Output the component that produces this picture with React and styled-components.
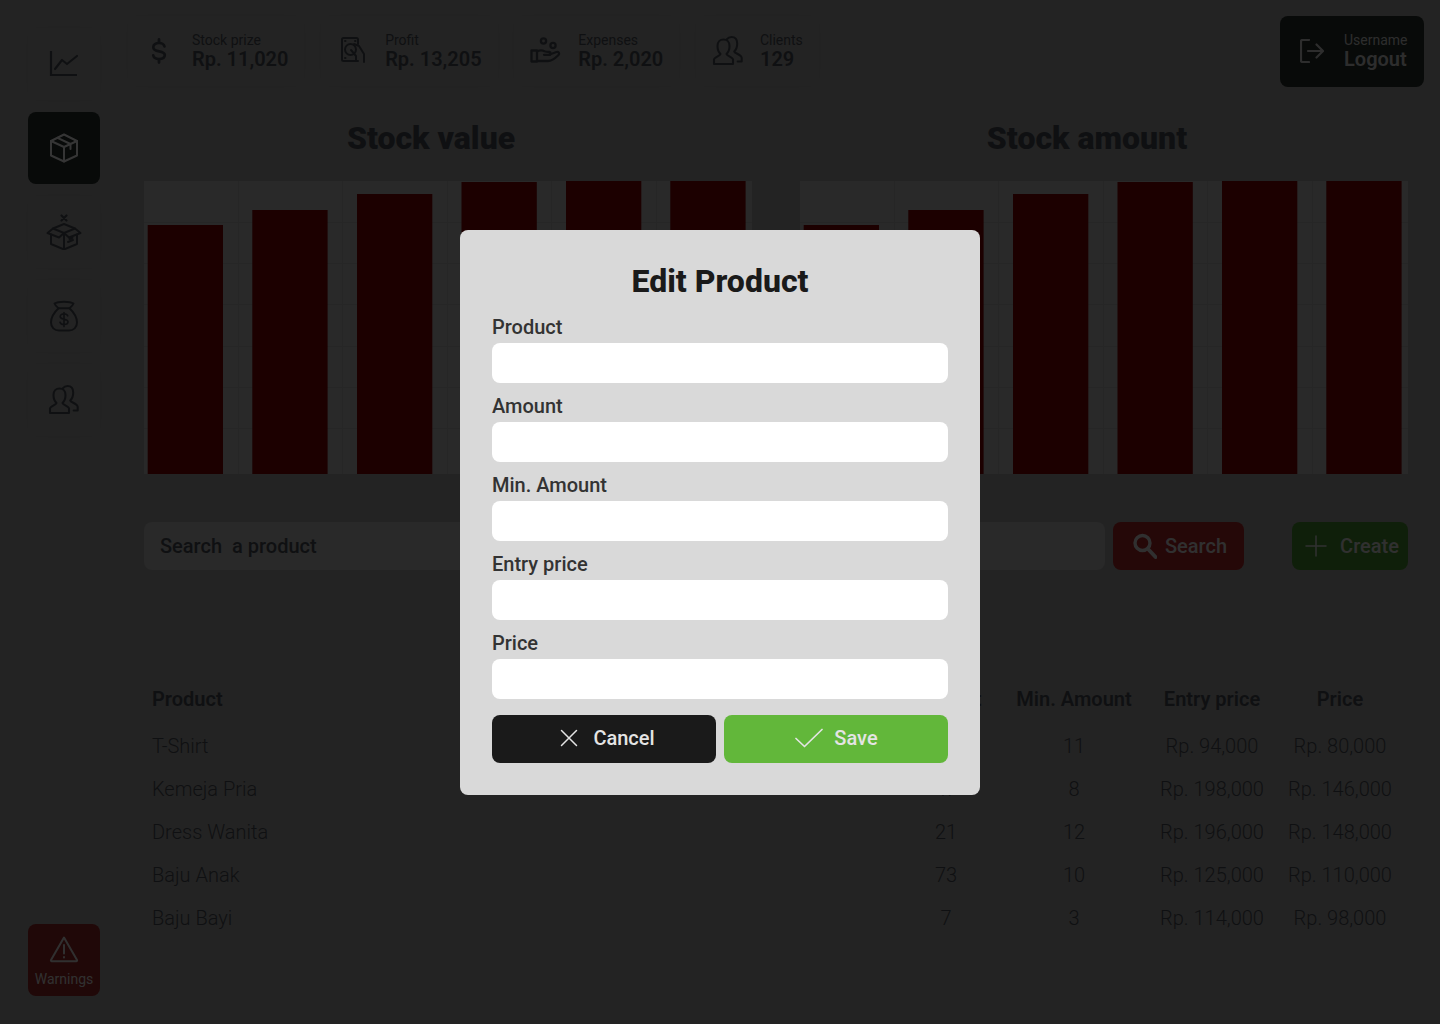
import React from 'react'
import styled, { createGlobalStyle } from 'styled-components'

const stats = [
  { label: 'Stock prize', value: 'Rp. 11,020', icon: <DollarIcon /> },
  { label: 'Profit', value: 'Rp. 13,205', icon: <ProfitIcon /> },
  { label: 'Expenses', value: 'Rp. 2,020', icon: <ExpenseIcon /> },
  { label: 'Clients', value: '129', icon: <UsersIcon /> },
]

const products = [
  ['T-Shirt', '43', '11', 'Rp. 94,000', 'Rp. 80,000'],
  ['Kemeja Pria', '47', '8', 'Rp. 198,000', 'Rp. 146,000'],
  ['Dress Wanita', '21', '12', 'Rp. 196,000', 'Rp. 148,000'],
  ['Baju Anak', '73', '10', 'Rp. 125,000', 'Rp. 110,000'],
  ['Baju Bayi', '7', '3', 'Rp. 114,000', 'Rp. 98,000'],
]

const fields = ['Product', 'Amount', 'Min. Amount', 'Entry price', 'Price']

const bars = [
  { x: 3.7, top: 44 },
  { x: 108.3, top: 29 },
  { x: 213, top: 13 },
  { x: 317.5, top: 1 },
  { x: 422, top: 0 },
  { x: 526.3, top: 0 },
]

function Svg({ size = 32, h, box, children, sw = 2 }) {
  return (
    <svg width={size} height={h || size} viewBox={box || '0 0 32 32'} fill="none" stroke="currentColor"
      strokeWidth={sw} strokeLinecap="round" strokeLinejoin="round">
      {children}
    </svg>
  )
}

function DollarIcon() {
  return (
    <Svg>
      <path d="M15 4.500v3M15 24.500v3" strokeWidth="2.8" />
      <path d="M20.500 11.500C20 9.300 17.800 8 15 8c-3.300 0-5.700 1.700-5.700 4.200 0 6 11.500 2.300 11.500 7.900 0 2.500-2.500 3.900-5.800 3.900-3 0-5.300-1.400-5.800-3.700" strokeWidth="2.7" />
    </Svg>
  )
}

function ProfitIcon() {
  return (
    <Svg sw={2}>
      <path d="M21 26H6.500A1.500 1.500 0 0 1 5 24.500v-20A1.500 1.500 0 0 1 6.500 3h13A1.500 1.500 0 0 1 21 4.500V9" />
      <circle cx="13.500" cy="14.500" r="5.500" />
      <path d="M17 9l5 2 5 8v8M14 15l5 6v5" />
      <path d="M8 6h.5M18 6h.5M8 23h.5" />
    </Svg>
  )
}

function ExpenseIcon() {
  return (
    <Svg sw={2.3}>
      <circle cx="13.500" cy="6" r="2.600" />
      <circle cx="23" cy="10.500" r="2.600" />
      <path d="M1.500 15.500h5.500v11H1.500z" />
      <path d="M7 16.500c3-1.500 5-1.500 7.500-.2 1.500.7 3.500.7 5 .7 1.300 0 1.800 2.800-.5 2.800h-5" />
      <path d="M19.500 19.500l7-2.500c2-.6 3.500 1.500 2 3-3 3-6.500 6-10.500 6H7" />
    </Svg>
  )
}

function UsersIcon() {
  return (
    <Svg sw={2.1}>
      <path d="M2 29v-4.500c0-2 6-3.500 6.500-5.500-2.200-2-3-5-3-8 0-4 2.500-6.500 6-6.500s6 2.500 6 6.500c0 3-.8 6-3 8 .5 2 6.500 3.500 6.500 5.500V29z" />
      <path d="M15 4.200C16 2.800 17.500 2 19.500 2c3.500 0 5.700 2.500 5.700 6.500 0 3-.8 6-3 8 .5 2 7.500 3 7.500 6.500v3.500h-4" />
    </Svg>
  )
}

function ChartIcon() {
  return (
    <Svg sw={2.2}>
      <path d="M3 3v24h26" strokeLinecap="butt" strokeLinejoin="miter" />
      <path d="M7 21l7-9 5 4 10-8" />
    </Svg>
  )
}

function BoxIcon() {
  return (
    <Svg sw={2}>
      <path d="M16 2.500L29 9v14.500L16 29.500 3 23.500V9z" />
      <path d="M3 9l13 6 13-6M16 15v14.500M9.500 5.800l13 6.200v5" />
    </Svg>
  )
}

function BoxXIcon() {
  return (
    <Svg size={36} h={36} box="0 0 36 36" sw={2}>
      <path d="M15.500 1.500l5 5M20.500 1.500l-5 5" strokeWidth="2.200" />
      <path d="M18 10l11 4.500L18 19 7 14.500z" />
      <path d="M7 14.500L1.500 19 13 23.500l5-4.500 5 4.500L34.500 19 29 14.500" />
      <path d="M5 20.500V30l13 5.500L31 30v-9.500M18 19v16.500M22 28l5-2M23.500 25l3-1.200" />
    </Svg>
  )
}

function BagIcon() {
  return (
    <Svg size={32} sw={2}>
      <path d="M6.500 3.500C10 1 22 1 25.500 3.500c-1 2.500-3 4-4 4.700h-11c-1-.7-3-2.200-4-4.700z" />
      <path d="M10.500 8.200C6.500 12 3 17 3 22.500c0 5 3.500 8 8 8h10c4.500 0 8-3 8-8 0-5.500-3.500-10.500-7.500-14.300" />
      <path d="M16 12.500v14M19.700 15.800c-.5-1.400-2-2-3.700-2-2.300 0-3.800 1.100-3.800 2.800 0 3.800 7.800 1.500 7.800 5.200 0 1.700-1.700 2.700-4 2.700-2 0-3.500-.8-4-2.300" strokeWidth="1.700" />
    </Svg>
  )
}

function WarnIcon() {
  return (
    <Svg sw={2}>
      <path d="M16 4.500L29 27a.8.8 0 0 1-.7 1.200H3.700A.8.8 0 0 1 3 27z" />
      <path d="M16 12v8.500M16 24v.5" />
    </Svg>
  )
}

function LogoutIcon() {
  return (
    <Svg size={24} box="0 0 24 24" sw={2.2}>
      <path d="M9 1H2.500A1.500 1.500 0 0 0 1 2.500v19A1.500 1.500 0 0 0 2.500 23H9" />
      <path d="M8 12h15M16.500 5.500L23 12l-6.500 6.500" />
    </Svg>
  )
}

function SearchIcon() {
  return (
    <Svg size={24} h={26} box="0 0 24 26" sw={3.400}>
      <circle cx="9.500" cy="10" r="7.500" />
      <path d="M15.500 16.500l7 7.500" strokeWidth="3.800" />
    </Svg>
  )
}

function PlusIcon() {
  return (
    <Svg size={22} box="0 0 22 22" sw={1.5}>
      <path d="M11 1v20M1 11h20" />
    </Svg>
  )
}

function CloseIcon() {
  return (
    <Svg size={18} box="0 0 18 18" sw={1.5}>
      <path d="M1.500 1.500l15 15M16.500 1.500l-15 15" />
    </Svg>
  )
}

function CheckIcon() {
  return (
    <Svg size={28} h={20} box="0 0 28 20" sw={1.7}>
      <path d="M1 10.500L9.500 18.500 27 1.500" />
    </Svg>
  )
}

function Chart() {
  return (
    <ChartSvg width="608" height="293" viewBox="0 0 608 293">
      <rect width="608" height="293" fill="#a2a2a2" />
      {[41, 82, 123, 165, 206, 247].map((y) => (
        <line key={y} x1="0" x2="608" y1={y + 0.5} y2={y + 0.5} stroke="#969696" />
      ))}
      {[94, 198, 303, 407, 512].map((x) => (
        <line key={x} x1={x + 0.5} x2={x + 0.5} y1="0" y2="293" stroke="#969696" />
      ))}
      {bars.map((b) => (
        <rect key={b.x} x={b.x} y={b.top} width="75.300" height={293 - b.top} fill="#700000" />
      ))}
    </ChartSvg>
  )
}

export default function App() {
  return (
    <>
      <GlobalStyle />
      <Page>
        <Sidebar>
          <NavItem><ChartIcon /></NavItem>
          <NavItem $active><BoxIcon /></NavItem>
          <NavItem><BoxXIcon /></NavItem>
          <NavItem><BagIcon /></NavItem>
          <NavItem><UsersIcon /></NavItem>
          <WarningBtn>
            <WarnIcon />
            <span>Warnings</span>
          </WarningBtn>
        </Sidebar>

        <Main>
          <TopBar>
            <Stats>
              {stats.map((s) => (
                <StatCard key={s.label}>
                  {s.icon}
                  <div>
                    <SmallLabel>{s.label}</SmallLabel>
                    <BigValue>{s.value}</BigValue>
                  </div>
                </StatCard>
              ))}
            </Stats>
            <LogoutBtn>
              <LogoutIcon />
              <div>
                <SmallLabel>Username</SmallLabel>
                <BigValue>Logout</BigValue>
              </div>
            </LogoutBtn>
          </TopBar>

          <Charts>
            <ChartBlock>
              <ChartTitle>Stock value</ChartTitle>
              <Chart />
            </ChartBlock>
            <ChartBlock>
              <ChartTitle>Stock amount</ChartTitle>
              <Chart />
            </ChartBlock>
          </Charts>

          <SearchRow>
            <SearchInput placeholder="Search  a product" />
            <ActionBtn $bg="#942020" $w="131px" $gap="8px" $pl="3px">
              <SearchIcon />
              Search
            </ActionBtn>
            <ActionBtn $bg="#3f7c28" $w="116px" $ml="40px" $gap="13px" $pl="4px">
              <PlusIcon />
              Create
            </ActionBtn>
          </SearchRow>

          <Table>
            <HeadRow>
              <div>Product</div>
              <Centered>Amount</Centered>
              <Centered>Min. Amount</Centered>
              <Centered>Entry price</Centered>
              <Centered>Price</Centered>
            </HeadRow>
            {products.map((p) => (
              <Row key={p[0]}>
                <div>{p[0]}</div>
                <Centered>{p[1]}</Centered>
                <Centered>{p[2]}</Centered>
                <Centered>{p[3]}</Centered>
                <Centered>{p[4]}</Centered>
              </Row>
            ))}
          </Table>
        </Main>
      </Page>

      <Overlay>
        <Modal>
          <ModalTitle>Edit Product</ModalTitle>
          {fields.map((f) => (
            <Field key={f}>
              <FieldLabel>{f}</FieldLabel>
              <FieldInput />
            </Field>
          ))}
          <ModalButtons>
            <ModalBtn $bg="#1a1a1a" $gap="15px" $pl="7px">
              <CloseIcon />
              Cancel
            </ModalBtn>
            <ModalBtn $bg="#62b73a" $gap="11px" $pl="1px">
              <CheckIcon />
              Save
            </ModalBtn>
          </ModalButtons>
        </Modal>
      </Overlay>
    </>
  )
}

const GlobalStyle = createGlobalStyle`
  html, body {
    margin: 0;
    padding: 0;
    height: 100%;
    overflow: hidden;
    font-family: Roboto, "Liberation Sans", sans-serif;
  }
  * { box-sizing: border-box; }
`

const Page = styled.div`
  display: flex;
  width: 1440px;
  height: 1024px;
  background: #8c8c8c;
  color: #3e4248;
`

const Sidebar = styled.aside`
  width: 128px;
  padding: 28px;
  display: flex;
  flex-direction: column;
  gap: 12px;
`

const NavItem = styled.div`
  width: 72px;
  height: 72px;
  flex: none;
  border-radius: 8px;
  display: flex;
  align-items: center;
  justify-content: center;
  background: ${(p) => (p.$active ? '#202824' : 'transparent')};
  color: ${(p) => (p.$active ? '#d4d4d4' : '#3e4248')};
  box-shadow: ${(p) => (p.$active ? 'none' : '0 0 12px rgba(0,0,0,.04)')};
`

const WarningBtn = styled.div`
  width: 72px;
  height: 72px;
  margin-top: auto;
  border-radius: 8px;
  background: #802020;
  color: #c0c0c0;
  display: flex;
  flex-direction: column;
  align-items: center;
  justify-content: center;
  font-size: 14px;
  line-height: 16px;
  gap: 6px;
`

const Main = styled.main`
  flex: 1;
  min-width: 0;
  padding-top: 16px;
`

const TopBar = styled.div`
  display: flex;
  justify-content: space-between;
  padding-right: 16px;
`

const Stats = styled.div`
  display: flex;
  gap: 16.7px;
`

const StatCard = styled.div`
  height: 70px;
  padding: 0 16px;
  display: flex;
  align-items: center;
  gap: 16px;
  border-radius: 8px;
  box-shadow: 0 0 12px rgba(0, 0, 0, 0.04);
`

const SmallLabel = styled.div`
  font-size: 14px;
  line-height: 16px;
  font-weight: 400;
`

const BigValue = styled.div`
  font-size: 20px;
  line-height: 22px;
  font-weight: 600;
`

const LogoutBtn = styled.div`
  width: 144px;
  height: 71px;
  border-radius: 8px;
  background: #202824;
  color: #b4b4b4;
  display: flex;
  align-items: center;
  gap: 20px;
  padding: 0 0 1px 20px;
`

const Charts = styled.section`
  display: flex;
  gap: 48px;
  padding-left: 16px;
  margin-top: 32px;
`

const ChartBlock = styled.div`
  width: 608px;
`

const ChartTitle = styled.h2`
  margin: 0 34px 24px 0;
  font-size: 32px;
  line-height: 38px;
  font-weight: 900;
  text-align: center;
`

const ChartSvg = styled.svg`
  display: block;
`

const SearchRow = styled.div`
  display: flex;
  gap: 8px;
  margin: 48px 32px 0 16px;
`

const SearchInput = styled.input`
  flex: 1;
  min-width: 0;
  height: 48px;
  border: none;
  outline: none;
  border-radius: 8px;
  padding: 0 16px;
  background: #a2a2a2;
  font: 500 20px Roboto, sans-serif;
  white-space: pre;
  &::placeholder {
    color: #3e4248;
    opacity: 1;
  }
`

const ActionBtn = styled.button`
  width: ${(p) => p.$w};
  height: 48px;
  flex: none;
  margin-left: ${(p) => p.$ml || 0};
  border: none;
  border-radius: 8px;
  background: ${(p) => p.$bg};
  color: #c0c0c0;
  display: flex;
  align-items: center;
  justify-content: center;
  gap: ${(p) => p.$gap};
  padding: 0 0 0 ${(p) => p.$pl};
  font: 500 20px Roboto, sans-serif;
`

const Table = styled.div`
  margin: 107px 38px 0 8px;
  padding-left: 16px;
  font-size: 20px;
`

const Row = styled.div`
  display: grid;
  grid-template-columns: 1fr 112px 144px 132px 124px;
  height: 43px;
  align-items: center;
  font-weight: 300;
`

const HeadRow = styled(Row)`
  margin-bottom: 4px;
  font-weight: 600;
`

const Centered = styled.div`
  text-align: center;
`

const Overlay = styled.div`
  position: fixed;
  inset: 0;
  display: flex;
  align-items: center;
  justify-content: center;
  background: rgba(0, 0, 0, 0.75);
`

const Modal = styled.div`
  width: 520px;
  height: 565px;
  padding: 32px;
  background: #d9d9d9;
  border-radius: 8px;
  color: #1a1a1a;
  display: flex;
  flex-direction: column;
  gap: 11px;
`

const ModalTitle = styled.h2`
  margin: 0;
  height: 42px;
  line-height: 38px;
  font-size: 32px;
  font-weight: 800;
  text-align: center;
`

const Field = styled.div`
  display: flex;
  flex-direction: column;
  gap: 4px;
`

const FieldLabel = styled.label`
  font-size: 20px;
  line-height: 24px;
  font-weight: 500;
  color: #333;
`

const FieldInput = styled.input`
  height: 40px;
  border: none;
  outline: none;
  border-radius: 8px;
  background: #fff;
`

const ModalButtons = styled.div`
  display: flex;
  gap: 8px;
  margin-top: 5px;
`

const ModalBtn = styled.button`
  width: 224px;
  height: 48px;
  flex: none;
  border: none;
  border-radius: 8px;
  background: ${(p) => p.$bg};
  color: #e4e4e4;
  display: flex;
  align-items: center;
  justify-content: center;
  gap: ${(p) => p.$gap};
  padding: 0 0 2px ${(p) => p.$pl};
  font: 500 20px Roboto, sans-serif;
`
